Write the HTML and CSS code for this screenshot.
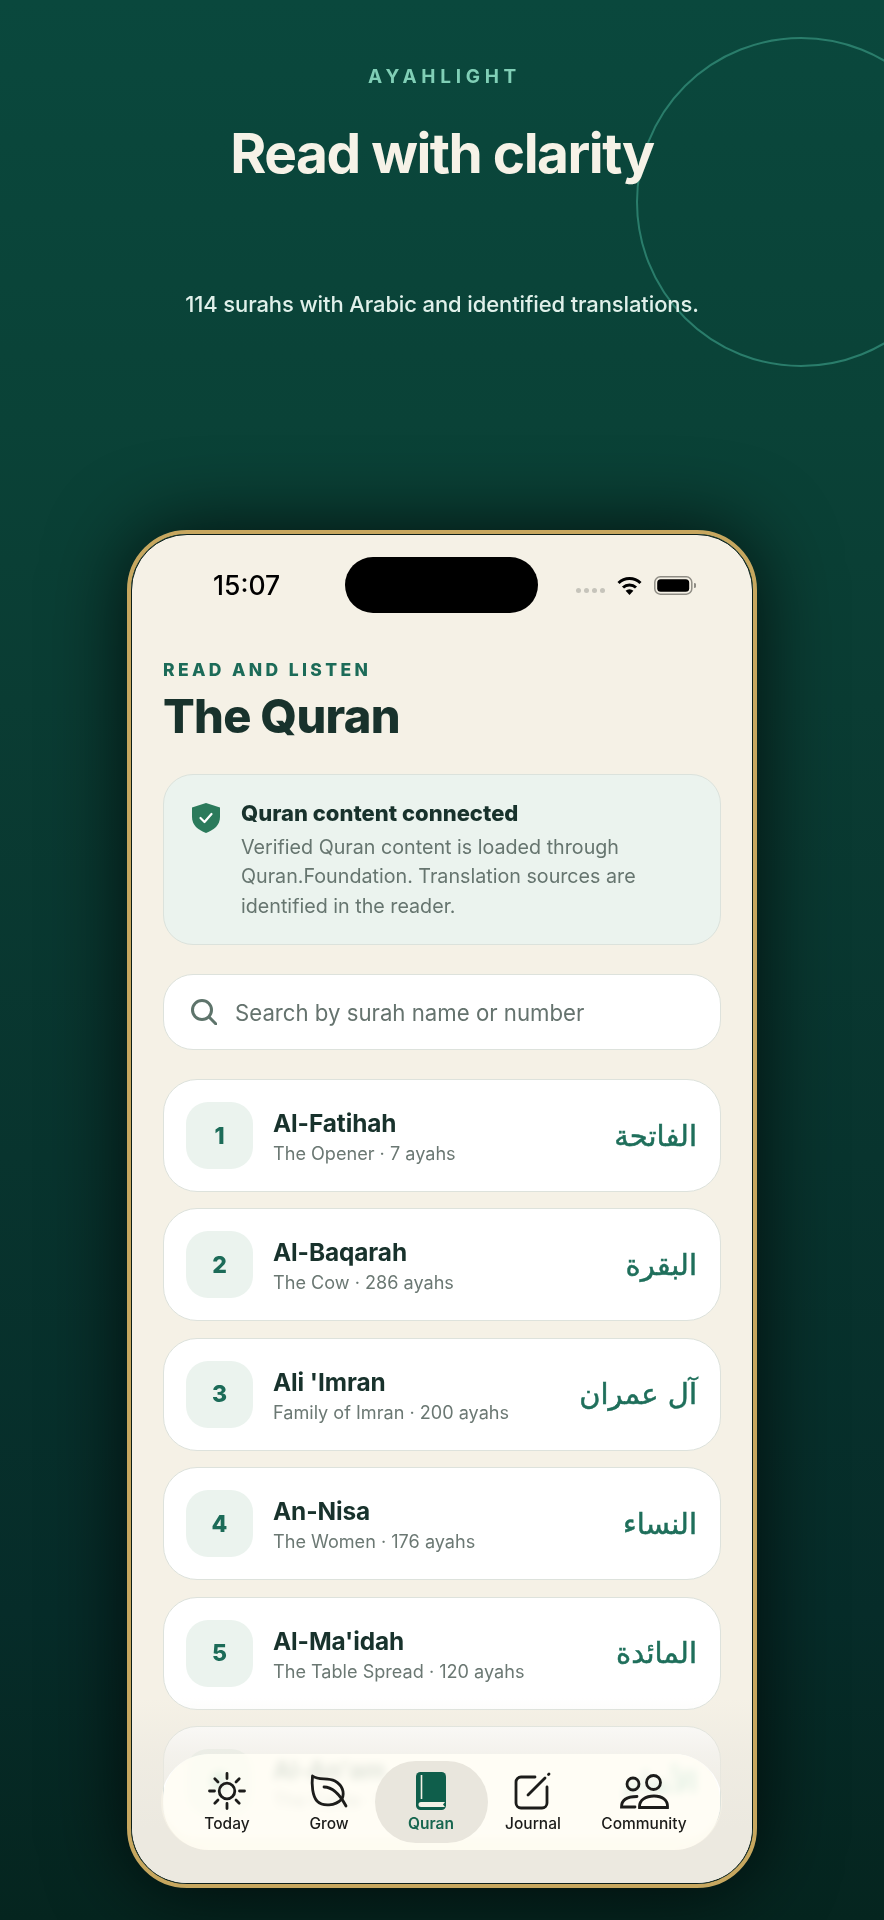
FILE: index.html
```html
<!DOCTYPE html>
<html lang="en">

<head>
    <meta charset="UTF-8">
    <meta name="viewport" content="width=device-width, initial-scale=1.0">
    <title>AyahLight</title>
    <link rel="stylesheet" href="styles.css">
</head>

<body>
    <div class="ring"></div>

    <header class="hero">
        <p class="brand">AYAHLIGHT</p>
        <h1 class="headline">Read with clarity</h1>
        <p class="tagline">114 surahs with Arabic and identified translations.</p>
    </header>

    <div class="phone">
        <div class="screen">
            <div class="status">
                <span class="time">15:07</span>
                <span class="island"></span>
                <div class="status-icons">
                    <span class="dots"><i></i><i></i><i></i><i></i></span>
                    <svg class="wifi" viewBox="0 0 25 19" width="25" height="19">
                        <path d="M1.5 7A16 16 0 0 1 23.5 7" fill="none" stroke="#000" stroke-width="3" />
                        <path d="M6 11.5A9.5 9.5 0 0 1 19 11.5" fill="none" stroke="#000" stroke-width="3" />
                        <path d="M12.5 19L8.6 14.8A5.6 5.6 0 0 1 16.4 14.8Z" fill="#000" />
                    </svg>
                    <svg class="battery" viewBox="0 0 42 19" width="42" height="19">
                        <rect x="0.8" y="0.8" width="37" height="17.4" rx="5.5" fill="none" stroke="#8f8d85" stroke-width="1.5" />
                        <rect x="3.2" y="3.2" width="32" height="12.6" rx="3.5" fill="#000" />
                        <path d="M40 7a2.5 2.5 0 0 1 0 5Z" fill="#8f8d85" />
                    </svg>
                </div>
            </div>

            <main class="content">
                <p class="eyebrow">READ AND LISTEN</p>
                <h2 class="title">The Quran</h2>

                <section class="notice">
                    <svg class="shield" viewBox="0 0 30 30" width="30" height="30">
                        <path d="M15 0L29 4.5V14C29 22 23 27 15 30C7 27 1 22 1 14V4.5Z" fill="#2b7a5b" />
                        <path d="M9.5 15L13.5 19L20.5 11" fill="none" stroke="#fff" stroke-width="2.2" stroke-linecap="round" stroke-linejoin="round" />
                    </svg>
                    <div>
                        <h3 class="notice-title">Quran content connected</h3>
                        <p class="notice-text">Verified Quran content is loaded through Quran.Foundation. Translation sources are identified in the reader.</p>
                    </div>
                </section>

                <div class="search">
                    <svg viewBox="0 0 26 26" width="26" height="26">
                        <circle cx="11" cy="11" r="9.5" fill="none" stroke="#5e746b" stroke-width="3" />
                        <path d="M18 18L25 25" stroke="#5e746b" stroke-width="3" stroke-linecap="round" />
                    </svg>
                    <span>Search by surah name or number</span>
                </div>

                <ul class="surahs">
                    <li class="surah">
                        <span class="num">1</span>
                        <div class="info">
                            <strong>Al-Fatihah</strong>
                            <small>The Opener · 7 ayahs</small>
                        </div>
                        <span class="arabic" lang="ar" dir="rtl">الفاتحة</span>
                    </li>
                    <li class="surah">
                        <span class="num">2</span>
                        <div class="info">
                            <strong>Al-Baqarah</strong>
                            <small>The Cow · 286 ayahs</small>
                        </div>
                        <span class="arabic" lang="ar" dir="rtl">البقرة</span>
                    </li>
                    <li class="surah">
                        <span class="num">3</span>
                        <div class="info">
                            <strong>Ali 'Imran</strong>
                            <small>Family of Imran · 200 ayahs</small>
                        </div>
                        <span class="arabic" lang="ar" dir="rtl">آل عمران</span>
                    </li>
                    <li class="surah">
                        <span class="num">4</span>
                        <div class="info">
                            <strong>An-Nisa</strong>
                            <small>The Women · 176 ayahs</small>
                        </div>
                        <span class="arabic" lang="ar" dir="rtl">النساء</span>
                    </li>
                    <li class="surah">
                        <span class="num">5</span>
                        <div class="info">
                            <strong>Al-Ma'idah</strong>
                            <small>The Table Spread · 120 ayahs</small>
                        </div>
                        <span class="arabic" lang="ar" dir="rtl">المائدة</span>
                    </li>
                    <li class="surah">
                        <span class="num">6</span>
                        <div class="info">
                            <strong>Al-An'am</strong>
                            <small>The Cattle · 165 ayahs</small>
                        </div>
                        <span class="arabic" lang="ar" dir="rtl">الأنعام</span>
                    </li>
                </ul>
            </main>

            <div class="fade"></div>

            <nav class="tabs">
                <a class="tab">
                    <svg viewBox="0 0 38 38" width="38" height="38" fill="none" stroke="#1c1c1a" stroke-width="2.8" stroke-linecap="round">
                        <circle cx="19" cy="19" r="7.8" />
                        <path d="M19 1.5V6.5M19 31.5V36.5M1.5 19H6.5M31.5 19H36.5M6.8 6.8L10 10M28 28L31.2 31.2M6.8 31.2L10 28M28 10L31.2 6.8" />
                    </svg>
                    <span>Today</span>
                </a>
                <a class="tab">
                    <svg viewBox="0 0 38 38" width="38" height="38" fill="none" stroke="#1c1c1a" stroke-width="2.8" stroke-linecap="round" stroke-linejoin="round">
                        <path d="M2.5 4C9 9 17 5 25 9C32 13 35 20 32 27C25 34 13 35 7 29C2.5 24 1.5 13 2.5 4Z" />
                        <path d="M14 15C21 15 29 21 36 34" />
                    </svg>
                    <span>Grow</span>
                </a>
                <a class="tab active">
                    <svg viewBox="0 0 30 38" width="30" height="38">
                        <rect x="0" y="0" width="30" height="38" rx="4.5" fill="#0f5e4b" />
                        <path d="M5.5 3V27" stroke="#f4f1e6" stroke-width="1.6" />
                        <path d="M5 30H29L27 32.5L29 35H5A2.5 2.5 0 0 1 5 30Z" fill="#f4f1e6" />
                    </svg>
                    <span>Quran</span>
                </a>
                <a class="tab">
                    <svg viewBox="0 0 38 38" width="38" height="38" fill="none" stroke="#1c1c1a" stroke-width="2.8" stroke-linecap="round">
                        <path d="M21 5H7A5 5 0 0 0 2 10V31A5 5 0 0 0 7 36H28A5 5 0 0 0 33 31V15" />
                        <path d="M14 23L31 6" />
                        <path d="M34.5 2.5L35 2" />
                    </svg>
                    <span>Journal</span>
                </a>
                <a class="tab">
                    <svg viewBox="0 0 50 38" width="50" height="38" fill="none" stroke="#1c1c1a" stroke-width="2.8" stroke-linecap="round">
                        <circle cx="14" cy="12" r="6" />
                        <circle cx="34.5" cy="10.5" r="7" />
                        <path d="M16 35H2.5C2.5 28 8 24.5 18 24.5" />
                        <path d="M20.5 35.5C20 28 27 24 35 24C43 24 49 28 48.5 35.5Z" />
                    </svg>
                    <span>Community</span>
                </a>
            </nav>
        </div>
    </div>
</body>

</html>
```

FILE: styles.css
```css
* {
    box-sizing: border-box;
}

html,
body {
    margin: 0;
    padding: 0;
}

body {
    position: relative;
    width: 884px;
    height: 1920px;
    overflow: hidden;
    font-family: Inter, "Noto Sans", sans-serif;
    background: linear-gradient(180deg, #0a483d 0%, #0a4237 22%, #0a3c33 36.5%, #062c29 84%, #05251f 100%);
}

.ring {
    position: absolute;
    left: 636px;
    top: 37px;
    width: 330px;
    height: 330px;
    border: 2px solid #2a7d6b;
    border-radius: 50%;
}

/* hero text */
.hero {
    position: relative;
    text-align: center;
    height: 530px;
    padding-top: 65px;
}

.brand {
    margin: 0;
    font-size: 19px;
    line-height: 24px;
    font-weight: 700;
    letter-spacing: 4.7px;
    text-indent: 5px;
    color: #80cfb6;
}

.headline {
    margin: 30px 0 0;
    font-size: 55px;
    line-height: 68px;
    font-weight: 700;
    letter-spacing: -1.5px;
    color: #f6f2e7;
}

.tagline {
    margin: 102px 0 0;
    font-size: 22px;
    line-height: 30px;
    font-weight: 500;
    letter-spacing: -.12px;
    color: #e0f0ea;
}

/* phone frame */
.phone {
    width: 630px;
    height: 1358px;
    margin-left: 127px;
    border: 4px solid #c7a75f;
    border-radius: 60px;
    box-shadow: 0 0 80px rgba(0, 0, 0, .75);
}

.screen {
    position: relative;
    height: 100%;
    overflow: hidden;
    border: 1px solid #0c1f1a;
    border-radius: 56px;
    background: #f5f1e6;
}

.status {
    display: grid;
    grid-template-columns: 213px 193px 1fr;
    align-items: center;
    height: 56px;
    margin-top: 22px;
}

.time {
    padding-left: 81px;
    font-size: 26.5px;
    font-weight: 500;
    color: #000;
}

.island {
    height: 56px;
    border-radius: 28px;
    background: #000;
}

.status-icons {
    display: flex;
    align-items: center;
    gap: 12px;
    padding-left: 38px;
}

.dots {
    display: flex;
    gap: 3px;
    margin-top: 10px;
}

.dots i {
    width: 5px;
    height: 5px;
    border-radius: 50%;
    background: #c6c4bb;
}

/* page content */
.content {
    padding: 46px 31px 0;
}

.eyebrow {
    margin: 0;
    font-size: 17.5px;
    line-height: 22px;
    font-weight: 800;
    letter-spacing: 3.35px;
    color: #1c6b58;
}

.title {
    margin: 7px 0 0;
    font-size: 47px;
    line-height: 56px;
    font-weight: 800;
    letter-spacing: -.7px;
    color: #18322c;
}

.notice {
    display: flex;
    gap: 20px;
    height: 171px;
    margin-top: 30px;
    padding: 28px 27px 0;
    border: 1.5px solid #dbe2dc;
    border-radius: 30px;
    background: #ebf3ee;
}

.shield {
    flex: none;
}

.notice-title {
    margin: -4px 0 0;
    font-size: 22px;
    line-height: 28px;
    font-weight: 800;
    color: #18322c;
}

.notice-text {
    margin: 6px 0 0;
    font-size: 19.7px;
    line-height: 29.3px;
    color: #66756f;
}

.search {
    display: flex;
    align-items: center;
    gap: 18px;
    height: 76px;
    margin-top: 29px;
    padding-left: 27px;
    border: 1.5px solid #dde2dc;
    border-radius: 30px;
    background: #fff;
    font-size: 22.2px;
    color: #65736e;
}

.surahs {
    display: flex;
    flex-direction: column;
    gap: 16.4px;
    margin: 29px 0 0;
    padding: 0;
    list-style: none;
}

.surah {
    display: flex;
    align-items: center;
    height: 113px;
    padding: 0 23px 0 22px;
    border: 1.5px solid #dde2dc;
    border-radius: 34px;
    background: #fff;
}

.num {
    display: flex;
    flex: none;
    align-items: center;
    justify-content: center;
    width: 67px;
    height: 67px;
    border-radius: 22px;
    background: #ebf3ee;
    font-size: 23px;
    font-weight: 800;
    color: #1c6b58;
}

.info {
    display: flex;
    flex: 1;
    flex-direction: column;
    padding: 1px 0 0 20px;
}

.info strong {
    font-size: 24.4px;
    line-height: 32px;
    font-weight: 700;
    letter-spacing: -.1px;
    color: #18322c;
}

.info small {
    margin-top: 2px;
    font-size: 18.1px;
    line-height: 24px;
    color: #6b7873;
}

.arabic {
    font-family: "DejaVu Sans", sans-serif;
    font-size: 29px;
    color: #1f6f5b;
    -webkit-text-stroke: .5px #1f6f5b;
}

/* bottom bar: the fade leaves a hole under the bar, so the row blurs through it */
.fade {
    position: absolute;
    left: 0;
    right: 0;
    bottom: 0;
    height: 185px;
    background: linear-gradient(180deg, rgba(236, 233, 224, 0) 0%, rgba(236, 233, 224, .6) 30%, #ece9e0 70%);
    clip-path: path(evenodd, "M0 0H620V185H0Z M77 56H542A46 46 0 0 1 542 152H77A46 46 0 0 1 77 56Z");
}

.tabs {
    position: absolute;
    left: 31px;
    bottom: 33px;
    display: grid;
    grid-template-columns: repeat(4, 102px) 120px;
    width: 557px;
    height: 96px;
    padding-left: 13px;
    align-items: center;
    border-radius: 46px;
    background: rgba(255, 253, 244, .87);
    backdrop-filter: blur(4px) saturate(180%);
}

.tab {
    display: flex;
    flex-direction: column;
    align-items: center;
    gap: 4px;
    font-size: 15.5px;
    font-weight: 500;
    color: #1c1c1a;
}

.tab.active {
    height: 82px;
    margin: 0 -5.5px;
    padding-top: 11px;
    border-radius: 41px;
    background: #e9e6dd;
    font-weight: 600;
    color: #17664f;
}
```
